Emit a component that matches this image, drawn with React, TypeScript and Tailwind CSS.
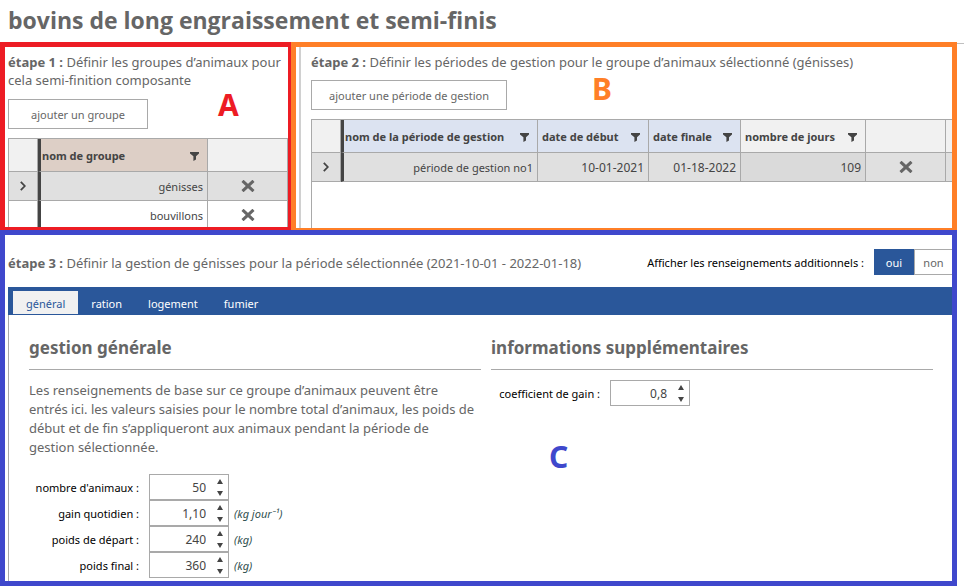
import { useState, type ReactNode } from 'react';

function FilterIcon() {
  return (
    <svg viewBox="0 0 9 9" className="h-[9px] w-[9px] shrink-0 fill-[#444444]" aria-hidden="true">
      <path d="M0 0H9V1.6L6 4.3V7.6L3.4 9V4.3L0 1.6Z" />
    </svg>
  );
}

function RemoveButton({ label }: { label: string }) {
  return (
    <button type="button" aria-label={label} className="mx-auto flex h-5 w-5 items-center justify-center">
      <svg viewBox="0 0 14 12" className="h-3 w-3.5" fill="none" stroke="#666666" strokeWidth="3" aria-hidden="true">
        <path d="M1.5 0.8L12.5 11.2M12.5 0.8L1.5 11.2" />
      </svg>
    </button>
  );
}

function ExpandButton({ label }: { label: string }) {
  return (
    <button type="button" aria-label={label} className="mx-auto flex h-5 w-5 items-center justify-center">
      <svg viewBox="0 0 6 10" className="h-2.5 w-1.5" fill="none" stroke="#444444" strokeWidth="1.8" aria-hidden="true">
        <path d="M0.8 0.8L4.8 5L0.8 9.2" />
      </svg>
    </button>
  );
}

function HeaderCell({ children, tone }: { children: ReactNode; tone: string }) {
  return (
    <th scope="col" className={`h-[33px] border-r border-b border-[#a9a9a9] px-1 pt-0.5 text-left font-bold whitespace-nowrap ${tone}`}>
      <span className="flex items-center justify-between pr-1">
        {children}
        <FilterIcon />
      </span>
    </th>
  );
}

function Spinner({ id, initial, step, digits }: { id: string; initial: number; step: number; digits: number }) {
  const [value, setValue] = useState(initial);
  return (
    <span className="flex h-[26px] w-20 border border-[#a9a9a9] bg-white">
      <input
        id={id}
        value={value.toFixed(digits).replace('.', ',')}
        onChange={(e) => {
          const next = Number(e.target.value.replace(',', '.'));
          if (!Number.isNaN(next)) setValue(next);
        }}
        className="w-14 min-w-0 pt-0.5 text-right text-[12px] text-[#444444] outline-none"
      />
      <span className="ml-auto flex w-4 flex-col">
        <button type="button" aria-label="augmenter" onClick={() => setValue(value + step)} className="flex flex-1 items-center justify-center">
          <svg viewBox="0 0 6 5" className="h-[5px] w-1.5 fill-[#444444]" aria-hidden="true">
            <path d="M3 0L6 5H0Z" />
          </svg>
        </button>
        <button type="button" aria-label="diminuer" onClick={() => setValue(value - step)} className="flex flex-1 items-center justify-center">
          <svg viewBox="0 0 6 5" className="h-[5px] w-1.5 fill-[#444444]" aria-hidden="true">
            <path d="M0 0H6L3 5Z" />
          </svg>
        </button>
      </span>
    </span>
  );
}

const tabs = ['général', 'ration', 'logement', 'fumier'];
const groups = ['génisses', 'bouvillons'];

const fields = [
  { id: 'nombre', label: "nombre d'animaux :", value: 50, step: 1, digits: 0, unit: '' },
  { id: 'gain', label: 'gain quotidien :', value: 1.1, step: 0.1, digits: 2, unit: '(kg jour⁻¹)' },
  { id: 'depart', label: 'poids de départ :', value: 240, step: 1, digits: 0, unit: '(kg)' },
  { id: 'final', label: 'poids final :', value: 360, step: 1, digits: 0, unit: '(kg)' },
];

function GroupsPanel() {
  return (
    <section className="relative overflow-hidden border-t-[5px] border-r-[3px] border-b-[3px] border-l-[5px] border-[#ed1c24] pt-1.5 pl-[3px]">
      <p className="text-[13px] leading-[18px]">
        <b>étape 1 :</b> Définir les groupes d’animaux pour cela semi-finition composante
      </p>
      <button type="button" className="mt-2.5 block h-[30px] w-[140px] border border-[#a9a9a9] bg-white pt-0.5 text-[11px]">
        ajouter un groupe
      </button>
      <table className="mt-[9px] w-full table-fixed border-separate border-spacing-0 border-t border-l border-[#a9a9a9] text-[11px] text-[#444444]">
        <colgroup>
          <col className="w-[29px]" />
          <col />
          <col className="w-20" />
        </colgroup>
        <thead>
          <tr>
            <td className="border-r border-b border-[#a9a9a9] bg-[#f1f1f1]" />
            <th scope="col" className="h-[33px] border-r border-b border-l-[3px] border-r-[#a9a9a9] border-b-[#a9a9a9] border-l-[#444444] bg-[#ddcfc6] pt-0.5 pr-2 pl-px text-left font-bold">
              <span className="flex items-center justify-between">
                nom de groupe
                <FilterIcon />
              </span>
            </th>
            <td className="border-r border-b border-[#a9a9a9] bg-[#f1f1f1]" />
          </tr>
        </thead>
        <tbody>
          {groups.map((name, i) => (
            <tr key={name} className={i === 0 ? 'bg-[#e0e0e0]' : 'bg-white'}>
              <td className="h-[29px] border-r border-b border-[#a9a9a9]">{i === 0 && <ExpandButton label={`ouvrir ${name}`} />}</td>
              <td className="border-r border-b border-l-[3px] border-r-[#a9a9a9] border-b-[#a9a9a9] border-l-[#444444] pt-0.5 pr-1 text-right">{name}</td>
              <td className="border-r border-b border-[#a9a9a9]">
                <RemoveButton label={`supprimer ${name}`} />
              </td>
            </tr>
          ))}
        </tbody>
      </table>
      <span className="absolute top-[43px] left-[213px] text-[30px] leading-[30px] font-bold text-[#ed1c24]">A</span>
    </section>
  );
}

function PeriodsPanel() {
  return (
    <section className="relative flex overflow-hidden border-[5px] border-b-2 border-[#ff7f27] pl-[3px]">
      <div className="flex min-w-0 flex-1 flex-col border-l-2 border-[#d0d0d0] pt-1.5 pl-2.5">
        <p className="text-[13px] leading-[18px]">
          <b>étape 2 :</b> Définir les périodes de gestion pour le groupe d’animaux sélectionné (génisses)
        </p>
        <button type="button" className="mt-[9px] block h-[30px] w-[196px] shrink-0 border border-[#a9a9a9] bg-white pt-0.5 text-[11px]">
          ajouter une période de gestion
        </button>
        <div className="mt-[9px] flex-1 border-t border-l border-[#a9a9a9]">
          <table className="w-full table-fixed border-separate border-spacing-0 text-[11px] text-[#444444]">
            <colgroup>
              <col className="w-[29px]" />
              <col className="w-[197px]" />
              <col className="w-[111px]" />
              <col className="w-[92px]" />
              <col className="w-[125px]" />
              <col className="w-20" />
              <col />
            </colgroup>
            <thead>
              <tr>
                <td className="border-r border-b border-[#a9a9a9] bg-[#f1f1f1]" />
                <th scope="col" className="h-[33px] border-r border-b border-l-[3px] border-r-[#a9a9a9] border-b-[#a9a9a9] border-l-[#444444] bg-[#dce3f1] pt-0.5 pr-2 pl-px text-left font-bold whitespace-nowrap">
                  <span className="flex items-center justify-between">
                    nom de la période de gestion
                    <FilterIcon />
                  </span>
                </th>
                <HeaderCell tone="bg-[#dce3f1]">date de début</HeaderCell>
                <HeaderCell tone="bg-[#dce3f1]">date finale</HeaderCell>
                <HeaderCell tone="bg-[#f1f1f1]">nombre de jours</HeaderCell>
                <td className="border-r border-b border-[#a9a9a9] bg-[#f1f1f1]" />
                <td className="border-b border-[#a9a9a9] bg-[#f1f1f1]" />
              </tr>
            </thead>
            <tbody>
              <tr className="bg-[#e0e0e0] text-right">
                <td className="h-[29px] border-r border-b border-[#a9a9a9]">
                  <ExpandButton label="ouvrir la période" />
                </td>
                <td className="border-r border-b border-l-[3px] border-r-[#a9a9a9] border-b-[#a9a9a9] border-l-[#444444] pt-0.5 pr-1">période de gestion no1</td>
                <td className="border-r border-b border-[#a9a9a9] pt-0.5 pr-1 text-[12px]">10-01-2021</td>
                <td className="border-r border-b border-[#a9a9a9] pt-0.5 pr-1 text-[12px]">01-18-2022</td>
                <td className="border-r border-b border-[#a9a9a9] bg-[#dadada] pt-0.5 pr-1 text-[12px]">109</td>
                <td className="border-r border-b border-[#a9a9a9]">
                  <RemoveButton label="supprimer la période" />
                </td>
                <td className="border-b border-[#a9a9a9]" />
              </tr>
            </tbody>
          </table>
        </div>
      </div>
      <span className="absolute top-[27px] left-[296px] text-[30px] leading-[30px] font-bold text-[#ff7f27]">B</span>
    </section>
  );
}

function ManagementPanel() {
  const [tab, setTab] = useState('général');
  const [extra, setExtra] = useState(true);
  return (
    <section className="relative col-span-2 border-[5px] border-[#3f48cc] pt-3.5 pl-[3px]">
      <div className="flex h-[26px] items-center">
        <p className="pt-0.5 text-[13px] leading-[18px]">
          <b>étape 3 :</b> Définir la gestion de génisses pour la période sélectionnée (2021-10-01 - 2022-01-18)
        </p>
        <div role="group" aria-labelledby="extra-label" className="ml-auto flex items-center text-[11px]">
          <span id="extra-label" className="mr-2.5 pt-0.5 text-black">
            Afficher les renseignements additionnels :
          </span>
          <button
            type="button"
            aria-pressed={extra}
            onClick={() => setExtra(true)}
            className={`h-[26px] w-10 pt-0.5 ${extra ? 'bg-[#2a579a] text-white' : 'border border-[#a9a9a9] bg-white'}`}
          >
            oui
          </button>
          <button
            type="button"
            aria-pressed={!extra}
            onClick={() => setExtra(false)}
            className={`h-[26px] w-[38px] pt-0.5 ${extra ? 'border border-r-0 border-[#a9a9a9] bg-white' : 'bg-[#2a579a] text-white'}`}
          >
            non
          </button>
        </div>
      </div>
      <div role="tablist" className="mt-3 flex h-7 items-end bg-[#2a579a] pt-1 pb-px pl-[5px] text-[11px]">
        {tabs.map((name) => (
          <button
            key={name}
            type="button"
            role="tab"
            aria-selected={tab === name}
            onClick={() => setTab(name)}
            className={`h-full px-[13px] pt-1 ${tab === name ? 'bg-[#f1f1f1] text-[#2a579a]' : 'text-white'}`}
          >
            {name}
          </button>
        ))}
      </div>
      <div role="tabpanel" className="grid grid-cols-[452px_1fr] gap-x-2.5 border-l border-[#a9a9a9] pt-5 pr-[19px] pb-[3px] pl-5">
        <div>
          <h2 className="h-[35px] border-b border-[#a9a9a9] text-[17px] leading-[26px] font-bold">gestion générale</h2>
          <p className="mt-[11px] pr-1 text-[13px] leading-[19px]">
            Les renseignements de base sur ce groupe d’animaux peuvent être entrés ici. les valeurs saisies pour le nombre total
            d’animaux, les poids de début et de fin s’appliqueront aux animaux pendant la période de gestion sélectionnée.
          </p>
          <div className="mt-[17px]">
            {fields.map((f) => (
              <div key={f.id} className="flex items-center text-[11px]">
                <label htmlFor={f.id} className="mr-2.5 w-[110px] pt-0.5 text-right whitespace-nowrap text-black">
                  {f.label}
                </label>
                <Spinner id={f.id} initial={f.value} step={f.step} digits={f.digits} />
                <span className="ml-[5px] pt-0.5 text-[#2f4f4f] italic">{f.unit}</span>
              </div>
            ))}
          </div>
        </div>
        <div>
          <h2 className="h-[35px] border-b border-[#a9a9a9] text-[17px] leading-[26px] font-bold">informations supplémentaires</h2>
          <div className="mt-2.5 flex items-center text-[11px]">
            <label htmlFor="coef" className="mr-2.5 w-[109px] pt-0.5 text-right whitespace-nowrap text-black">
              coefficient de gain :
            </label>
            <Spinner id="coef" initial={0.8} step={0.1} digits={1} />
          </div>
        </div>
      </div>
      <span className="absolute top-[207px] left-[544px] text-[30px] leading-[30px] font-bold text-[#3f48cc]">C</span>
    </section>
  );
}

export default function App() {
  return (
    <main className="bg-white font-['Noto_Sans','Open_Sans',sans-serif] text-[#666666]">
      <h1 className="h-[42px] pl-2 font-['Open_Sans','Noto_Sans',sans-serif] text-[23px] leading-[41px] font-bold">bovins de long engraissement et semi-finis</h1>
      <div className="flex">
        <div className="grid min-w-0 flex-1 grid-cols-[291px_1fr] grid-rows-[188px_auto]">
          <GroupsPanel />
          <PeriodsPanel />
          <ManagementPanel />
        </div>
        <div className="mt-px w-[7px] border-t border-[#c0c0c0]" />
      </div>
    </main>
  );
}
